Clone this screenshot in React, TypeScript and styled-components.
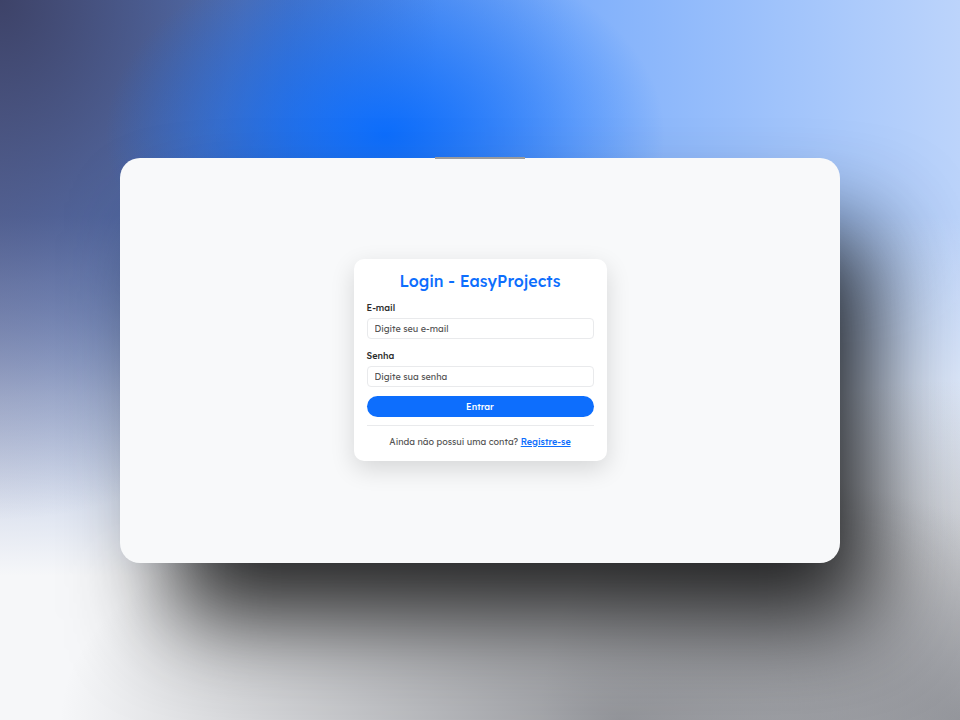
import React from "react";
import styled, { createGlobalStyle } from "styled-components";

const Global = createGlobalStyle`
  html, body { margin: 0; padding: 0; }
  body {
    width: 960px;
    height: 720px;
    overflow: hidden;
    font-family: "Lexend", Inter, "Noto Sans", sans-serif;
    background:
      radial-gradient(ellipse 280px 190px at 385px 135px, rgba(13,110,253,1) 0%, rgba(13,110,253,0) 100%),
      radial-gradient(ellipse 440px 520px at 0 0, rgba(60,64,100,0.95) 0%, rgba(90,96,135,0.55) 55%, rgba(120,124,150,0) 100%),
      radial-gradient(ellipse 560px 260px at 620px 720px, rgba(120,122,128,0.75) 0%, rgba(120,122,128,0) 100%),
      radial-gradient(ellipse 420px 340px at 960px 720px, rgba(150,152,158,0.9) 0%, rgba(150,152,158,0) 100%),
      linear-gradient(180deg, rgba(246,247,249,0) 0%, rgba(246,247,249,0) 30%, rgba(246,247,249,0.6) 55%, rgba(246,247,249,1) 80%),
      linear-gradient(90deg, #5573b8 0%, #3f7ee6 30%, #80b0fb 60%, #bcd4fb 100%);
  }
`;

const Stage = styled.main`
  width: 960px;
  height: 720px;
  display: flex;
  align-items: center;
  justify-content: center;
`;

const Window = styled.section`
  position: relative;
  width: 720px;
  height: 405px;
  border-radius: 20px;
  background: #f8f9fa;
  display: flex;
  align-items: center;
  justify-content: center;
  box-shadow: 40px 65px 95px -8px rgba(0, 0, 0, 0.85);
  &::before {
    content: "";
    position: absolute;
    top: -1px;
    left: 315px;
    width: 90px;
    height: 2px;
    background: #9a9b9d;
  }
`;

const LoginBox = styled.form`
  width: 253px;
  box-sizing: border-box;
  background: #ffffff;
  border-radius: 10px;
  padding: 11px 13px 13px;
  box-shadow: 0 8px 24px rgba(0, 0, 0, 0.14);
  display: flex;
  flex-direction: column;
`;

const Title = styled.h1`
  margin: 0 0 9px;
  font-size: 16px;
  font-weight: 500;
  color: #0d6efd;
  text-align: center;
  line-height: 22px;
`;

const Label = styled.label`
  font-size: 9px;
  font-weight: 500;
  color: #2b2b2b;
  line-height: 13px;
  margin-bottom: 4px;
`;

const Input = styled.input<{ $mb?: number }>`
  height: 21px;
  box-sizing: border-box;
  border: 1px solid #e9eaec;
  border-radius: 4px;
  padding: 0 7px;
  font-family: inherit;
  font-size: 9px;
  font-weight: 400;
  color: #333;
  margin-bottom: ${(p) => p.$mb ?? 0}px;
  &::placeholder { color: #555; }
`;

const Button = styled.button`
  height: 21px;
  border: none;
  border-radius: 11px;
  background: #0d6efd;
  color: #fff;
  font-family: inherit;
  font-size: 9px;
  font-weight: 500;
  margin-top: 9px;
  padding: 0;
`;

const Divider = styled.hr`
  border: none;
  border-top: 1px solid #e9eaec;
  margin: 8px 0 9px;
  width: 100%;
`;

const Footer = styled.p`
  margin: 0;
  text-align: center;
  font-size: 9px;
  color: #555;
  line-height: 13px;
`;

const Link = styled.a`
  color: #0d6efd;
  font-weight: 500;
  text-decoration: underline;
`;

export default function App() {
  return (
    <>
      <Global />
      <Stage>
        <Window>
          <LoginBox onSubmit={(e) => e.preventDefault()}>
            <Title>Login - EasyProjects</Title>
            <Label>E-mail</Label>
            <Input $mb={10} placeholder="Digite seu e-mail" />
            <Label>Senha</Label>
            <Input placeholder="Digite sua senha" />
            <Button type="submit">Entrar</Button>
            <Divider />
            <Footer>
              Ainda não possui uma conta? <Link href="#">Registre-se</Link>
            </Footer>
          </LoginBox>
        </Window>
      </Stage>
    </>
  );
}
